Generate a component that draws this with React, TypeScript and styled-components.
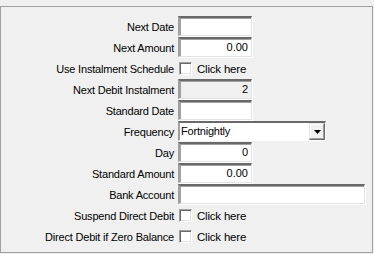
import React from "react";
import styled, { createGlobalStyle } from "styled-components";

type Field = {
  label: string;
  kind: "text" | "check" | "select";
  value?: string;
  width?: number;
  readOnly?: boolean;
};

const fields: Field[] = [
  { label: "Next Date", kind: "text", value: "", width: 74 },
  { label: "Next Amount", kind: "text", value: "0.00", width: 74 },
  { label: "Use Instalment Schedule", kind: "check" },
  { label: "Next Debit Instalment", kind: "text", value: "2", width: 74, readOnly: true },
  { label: "Standard Date", kind: "text", value: "", width: 74 },
  { label: "Frequency", kind: "select", value: "Fortnightly" },
  { label: "Day", kind: "text", value: "0", width: 74 },
  { label: "Standard Amount", kind: "text", value: "0.00", width: 74 },
  { label: "Bank Account", kind: "text", value: "", width: 187 },
  { label: "Suspend Direct Debit", kind: "check" },
  { label: "Direct Debit if Zero Balance", kind: "check" },
];

function App() {
  return (
    <>
      <GlobalStyle />
      <Page>
        <Panel>
          {fields.map((f) => (
            <Row key={f.label}>
              <Label>{f.label}</Label>
              {f.kind === "text" && (
                <TextBox $width={f.width || 74} $readOnly={!!f.readOnly}>
                  {f.value}
                </TextBox>
              )}
              {f.kind === "check" && (
                <CheckWrap>
                  <CheckBox />
                  <span>Click here</span>
                </CheckWrap>
              )}
              {f.kind === "select" && (
                <Select>
                  <SelectText>{f.value}</SelectText>
                  <DropButton>
                    <svg width="7" height="4" viewBox="0 0 7 4">
                      <polygon points="0,0 7,0 3.5,4" fill="#000" />
                    </svg>
                  </DropButton>
                </Select>
              )}
            </Row>
          ))}
        </Panel>
      </Page>
    </>
  );
}

export default App;

const GlobalStyle = createGlobalStyle`
  html, body {
    margin: 0;
    padding: 0;
    background: #f0f0f0;
  }
  body {
    font-family: "Liberation Sans", Arial, sans-serif;
    font-size: 11px;
    color: #000;
  }
`;

const Page = styled.div`
  width: 374px;
  height: 254px;
  padding-top: 6px;
  box-sizing: border-box;
  background: #f0f0f0;
`;

const Panel = styled.div`
  width: 373px;
  height: 247px;
  box-sizing: border-box;
  border: 1px solid #a0a0a0;
  padding-top: 9px;
  display: flex;
  flex-direction: column;
`;

const Row = styled.div`
  display: grid;
  grid-template-columns: 173px auto;
  column-gap: 4px;
  align-items: center;
  height: 21px;
`;

const Label = styled.div`
  text-align: right;
  white-space: nowrap;
  line-height: 20px;
  letter-spacing: -0.2px;
`;

const TextBox = styled.div<{ $width: number; $readOnly: boolean }>`
  width: ${(p) => p.$width}px;
  height: 20px;
  box-sizing: border-box;
  border-style: solid;
  border-width: 2px 1px 1px 2px;
  border-color: #696969 #e3e3e3 #e3e3e3 #a0a0a0;
  box-shadow: inset 1px 1px 0 #a0a0a0, 1px 1px 0 #fff;
  background: ${(p) => (p.$readOnly ? "#f0f0f0" : "#fff")};
  text-align: right;
  padding: 0 3px;
  line-height: 17px;
  align-self: start;
`;

const CheckWrap = styled.div`
  display: flex;
  align-items: center;
  gap: 5px;
  padding-left: 1px;
  font-size: 11.5px;
  letter-spacing: -0.2px;
`;

const CheckBox = styled.div`
  width: 13px;
  height: 13px;
  box-sizing: border-box;
  background: #fff;
  border-style: solid;
  border-width: 1px;
  border-color: #a0a0a0 #fff #fff #a0a0a0;
  box-shadow: inset 1px 1px 0 #696969, inset -1px -1px 0 #e3e3e3;
`;

const Select = styled.div`
  width: 148px;
  height: 20px;
  box-sizing: border-box;
  display: flex;
  align-items: stretch;
  border-style: solid;
  border-width: 2px 1px 1px 2px;
  border-color: #696969 #fff #fff #a0a0a0;
  background: #fff;
  align-self: start;
`;

const SelectText = styled.div`
  flex: 1;
  padding-left: 1px;
  line-height: 17px;
  font-size: 11px;
  letter-spacing: -0.2px;
`;

const DropButton = styled.div`
  width: 16px;
  box-sizing: border-box;
  display: flex;
  align-items: center;
  justify-content: center;
  background: #f0f0f0;
  border-style: solid;
  border-width: 1px;
  border-color: #e3e3e3 #696969 #696969 #e3e3e3;
  box-shadow: inset -1px -1px 0 #a0a0a0, inset 1px 1px 0 #fff;
`;
